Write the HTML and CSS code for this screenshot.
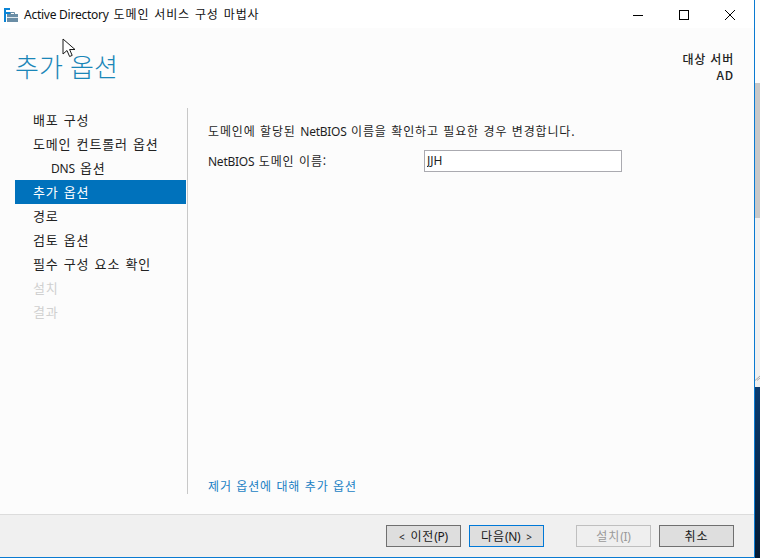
FILE: index.html
```html
<!DOCTYPE html>
<html lang="ko">
<head>
<meta charset="utf-8">
<title>Active Directory 도메인 서비스 구성 마법사</title>
<link rel="stylesheet" href="styles.css">
</head>
<body>
<div class="screen">
  <div class="window">
    <header class="titlebar">
      <svg class="app-icon" width="14" height="14" viewBox="0 0 14 14">
        <rect x="0" y="0" width="2" height="14" fill="#0a84d6"/>
        <rect x="2" y="0" width="4" height="2" fill="#0a84d6"/>
        <rect x="2" y="4" width="5" height="2" fill="#0a84d6"/>
        <rect x="3" y="6" width="11" height="8" fill="#6b8ea6"/>
        <path d="M6.5 6V4.5h4V6" fill="none" stroke="#6b8ea6"/>
        <rect x="3" y="9" width="11" height="1" fill="#dfe8ee"/>
      </svg>
      <span class="title"><span class="lat">Active Directory</span> 도메인 서비스 구성 마법사</span>
      <div class="controls">
        <svg width="46" height="24" viewBox="0 0 46 24"><path d="M18 13.5h10" stroke="#000" fill="none"/></svg>
        <svg width="46" height="24" viewBox="0 0 46 24"><rect x="18.5" y="8.5" width="9" height="9" stroke="#000" fill="none"/></svg>
        <svg width="46" height="24" viewBox="0 0 46 24"><path d="M18 8l10 10M28 8l-10 10" stroke="#000" fill="none"/></svg>
      </div>
    </header>
    <div class="body">
      <div class="head">
        <h1 class="page-title">추가 옵션</h1>
        <div class="target">대상 서버<br>AD</div>
      </div>
      <div class="main">
        <nav class="nav">
          <div class="nav-item">배포 구성</div>
          <div class="nav-item">도메인 컨트롤러 옵션</div>
          <div class="nav-item sub"><span class="lat">DNS</span> 옵션</div>
          <div class="nav-item active">추가 옵션</div>
          <div class="nav-item">경로</div>
          <div class="nav-item">검토 옵션</div>
          <div class="nav-item">필수 구성 요소 확인</div>
          <div class="nav-item off">설치</div>
          <div class="nav-item off">결과</div>
        </nav>
        <section class="content">
          <p class="intro">도메인에 할당된 <span class="lat">NetBIOS</span> 이름을 확인하고 필요한 경우 변경합니다.</p>
          <div class="field">
            <label class="field-label" for="nb"><span class="lat">NetBIOS</span> 도메인 이름:</label>
            <input class="field-input" id="nb" value="JJH">
          </div>
          <a class="more" href="#">제거 옵션에 대해 추가 옵션</a>
        </section>
      </div>
    </div>
    <footer class="footer">
      <button class="btn"><span class="chev">&lt;</span> 이전<span class="lat">(P)</span></button>
      <button class="btn default">다음<span class="lat">(N)</span> <span class="chev">&gt;</span></button>
      <button class="btn disabled install">설치<span class="lat">(I)</span></button>
      <button class="btn">취소</button>
    </footer>
  </div>
  <aside class="desktop">
    <div class="desk-top"></div>
    <div class="desk-thumb"></div>
    <div class="desk-track">
      <svg class="grip" width="5" height="6" viewBox="0 0 5 6"><path d="M0 5.5L5 1M2 5.5l3-2.5" stroke="#a8a8a8" fill="none"/></svg>
    </div>
    <div class="desk-bottom"></div>
  </aside>
  <svg class="cursor" width="14" height="21" viewBox="0 0 14 21">
    <path d="M1 1v15l4-3.5 2.6 6 2.6-1.1-2.6-5.9H13z" fill="#fff" stroke="#1a1a1a"/>
  </svg>
</div>
</body>
</html>
```
FILE: styles.css
```css
* { box-sizing: border-box; }
html, body { margin: 0; padding: 0; }
body { font-family: "Noto Sans CJK KR", "Noto Sans", sans-serif; font-size: 12px; color: #1f1f1f; letter-spacing: 0.85px; word-spacing: 0.3px; }
.lat { font-family: "Noto Sans", sans-serif; font-size: 12px; letter-spacing: -0.25px; word-spacing: 0; }
.chev { font-family: "Noto Sans", sans-serif; font-size: 10px; letter-spacing: 0; }
.screen { position: relative; display: flex; width: 760px; height: 558px; overflow: hidden; }
.window { width: 755px; height: 558px; flex: none; display: flex; flex-direction: column; border-right: 1px solid #0a7ad1; border-bottom: 1px solid #0a7ad1; background: #fcfcfc; }
.desktop { flex: 1; display: flex; flex-direction: column; }
.desk-top { height: 83px; background: #fdfdfd; }
.desk-thumb { height: 135px; background: #c8c8c8; }
.desk-track { height: 169px; background: #f0f0f0; display: flex; align-items: flex-end; padding-bottom: 6px; }
.grip { display: block; }
.desk-bottom { flex: 1; background: linear-gradient(#0b3c70, #041a33); }
.titlebar { height: 28px; display: flex; align-items: center; background: #fff; padding-left: 4px; flex: none; }
.app-icon { flex: none; margin-top: 2px; }
.title { margin-left: 6px; color: #111; word-spacing: 0.8px; }
.controls { margin-left: auto; display: flex; margin-right: 1px; }
.controls svg { display: block; margin-top: -1px; }
.body { flex: 1; display: flex; flex-direction: column; min-height: 0; }
.head { height: 80px; display: flex; justify-content: space-between; padding: 21px 20px 0 15px; flex: none; }
.page-title { margin: 0; font-size: 26px; font-weight: 300; line-height: 34px; color: #1a86b8; letter-spacing: 0; word-spacing: 0; }
.target { line-height: 16px; text-align: right; padding-top: 2px; font-weight: 500; color: #222; letter-spacing: 0.8px; word-spacing: 0; }
.main { flex: 1; display: flex; min-height: 0; padding-bottom: 20px; }
.nav { width: 172px; margin-left: 15px; flex: none; font-size: 13px; letter-spacing: 0.85px; word-spacing: 0.7px; }
.nav-item { height: 24px; line-height: 24px; padding-left: 18px; color: #222; width: 171px; white-space: nowrap; }
.nav-item.sub { padding-left: 36px; }
.nav-item.active { background: #0072bc; color: #fff; }
.nav-item.off { color: #d0d0d0; }
.content { flex: 1; display: flex; flex-direction: column; border-left: 1px solid #c8c8c8; padding: 14px 0 0 20px; }
.intro { margin: 0; line-height: 18px; }
.field { display: flex; align-items: center; margin-top: 9px; }
.field-label { width: 216px; }
.field-input { width: 198px; height: 22px; border: 1px solid #aaaab0; padding: 0 2px 2px; font-family: "Noto Sans", sans-serif; font-size: 12px; letter-spacing: 0; color: #222; background: #fff; outline: 0; }
.more { margin-top: auto; color: #1a7fc4; text-decoration: none; line-height: 16px; }
.footer { height: 43px; flex: none; background: #f0f0f0; border-top: 1px solid #dcdcdc; display: flex; align-items: flex-start; padding: 10px 0 0 386px; }
.btn { width: 75px; height: 22px; margin-right: 8px; border: 1px solid #707070; background: #dedede; font: inherit; letter-spacing: inherit; word-spacing: 1.5px; color: #1a1a1a; padding: 0; line-height: 18px; }
.btn.default { border-color: #0078d7; }
.btn.disabled { border-color: #bfbfbf; background: #efefef; color: #9a9a9a; }
.btn.install { margin-left: 24px; }
.cursor { position: absolute; left: 62px; top: 38px; }
```
